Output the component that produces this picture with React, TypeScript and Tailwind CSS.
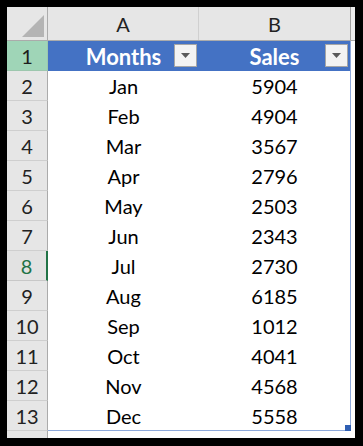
const sales: [string, number][] = [
  ["Jan", 5904],
  ["Feb", 4904],
  ["Mar", 3567],
  ["Apr", 2796],
  ["May", 2503],
  ["Jun", 2343],
  ["Jul", 2730],
  ["Aug", 6185],
  ["Sep", 1012],
  ["Oct", 4041],
  ["Nov", 4568],
  ["Dec", 5558],
];

function FilterButton() {
  return (
    <div className="absolute right-[2px] top-[3px] flex h-[23px] w-[23px] items-center justify-center border border-[#a6a6a6] bg-[#f3f3f3]">
      <svg width="9" height="5" viewBox="0 0 9 5">
        <path d="M0 0 H9 L4.5 5 Z" fill="#5a5a5a" />
      </svg>
    </div>
  );
}

function RowHeader({ n }: { n: number }) {
  if (n === 1) {
    return (
      <div className="flex w-[41px] shrink-0 items-center justify-center border-b border-r border-[#9dc7ae] bg-[#9fd5b7] text-[#1d1d1d]">
        {n}
      </div>
    );
  }
  if (n === 8) {
    return (
      <div className="flex w-[41px] shrink-0 items-center justify-center border-b border-r-2 border-b-[#c8c8c8] border-r-[#217346] bg-[#e2e2e2] text-[#217346]">
        {n}
      </div>
    );
  }
  return (
    <div className="flex w-[41px] shrink-0 items-center justify-center border-b border-r border-b-[#cfcfcf] border-r-[#ababab] bg-[#e6e6e6] text-[#222]">
      {n}
    </div>
  );
}

export default function App() {
  return (
    <div
      className="h-[446px] w-[363px] bg-black pb-[8px] pl-[7px] pr-[8px] pt-[7px] text-[20px]"
      style={{ fontFamily: "Lato, 'Open Sans', sans-serif" }}
    >
      <div className="flex h-full w-full flex-col overflow-hidden bg-white">
        {/* column letters */}
        <div className="flex h-[34px] shrink-0 border-b border-[#ababab] bg-[#e6e6e6] text-[#222]">
          <div className="relative w-[41px] shrink-0 border-r border-[#ababab]">
            <svg className="absolute bottom-[3px] right-[3px]" width="22" height="22" viewBox="0 0 22 22">
              <path d="M0 22 L22 22 L22 0 Z" fill="#b4b4b4" />
            </svg>
          </div>
          <div className="flex w-[151px] shrink-0 items-center justify-center border-r border-[#d0d0d0]">A</div>
          <div className="flex w-[152px] shrink-0 items-center justify-center border-r border-[#a0a0a0]">B</div>
          <div className="flex-1 bg-[#ececec]" />
        </div>

        {/* table header row */}
        <div className="flex h-[30px] shrink-0">
          <RowHeader n={1} />
          <div className="relative flex w-[151px] shrink-0 items-center justify-center bg-[#4472c4] text-[22px] font-bold text-white">
            Months
            <FilterButton />
          </div>
          <div className="relative flex w-[152px] shrink-0 items-center justify-center border-r border-[#8ea9db] bg-[#4472c4] text-[22px] font-bold text-white">
            Sales
            <FilterButton />
          </div>
          <div className="flex-1" />
        </div>

        {sales.map(([m, v], i) => (
          <div key={m} className="flex h-[30px] shrink-0">
            <RowHeader n={i + 2} />
            <div className={`flex w-[151px] shrink-0 items-center justify-center text-black ${i === 11 ? "border-b border-[#8ea9db]" : ""}`}>
              {m}
            </div>
            <div className={`relative flex w-[152px] shrink-0 items-center justify-center border-r border-[#8ea9db] text-black ${i === 11 ? "border-b" : ""}`}>
              {v}
              {i === 11 && <div className="absolute -bottom-px -right-px h-[6px] w-[6px] bg-[#2f5fb3]" />}
            </div>
            <div className="flex-1" />
          </div>
        ))}

        {/* partial row 14 */}
        <div className="flex flex-1">
          <div className="w-[41px] shrink-0 border-r border-[#ababab] bg-[#e6e6e6]" />
          <div className="flex-1" />
        </div>
      </div>
    </div>
  );
}
